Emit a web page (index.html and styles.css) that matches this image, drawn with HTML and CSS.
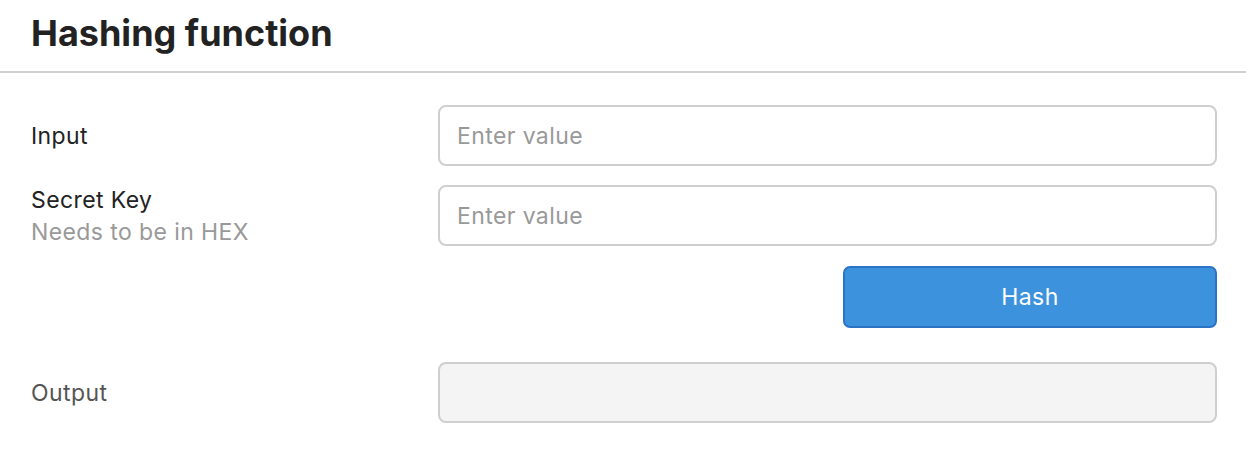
FILE: index.html
```html
<!DOCTYPE html>
<html>
  <head>
    <meta charset="utf-8">
    <meta name="viewport" content="width=device-width">
    <title>Hashing function</title>
    <link rel="stylesheet" href="styles.css">
  </head>
  <body>
    <div class="header">
      <h1>Hashing function</h1>
    </div>
    <div class="form">
      <div class="label">
        <label for="input">Input</label>
      </div>
      <input id="input" class="field" type="text" placeholder="Enter value">

      <div class="label">
        <label for="secret">Secret Key</label>
        <span class="hint">Needs to be in HEX</span>
      </div>
      <input id="secret" class="field" type="text" placeholder="Enter value">

      <div class="actions">
        <button class="hash">Hash</button>
      </div>

      <div class="label output-label">
        <label for="output">Output</label>
      </div>
      <input id="output" class="field output" type="text" readonly>
    </div>
  </body>
</html>
```

FILE: styles.css
```css
body {
  margin: 0;
  font-family: Inter, "Noto Sans", sans-serif;
  color: #222;
  background: #fff;
}
.header {
  padding: 0 31px;
  height: 71px;
  display: flex;
  align-items: center;
  border-bottom: 2px solid #d0d0d0;
}
h1 {
  margin: 0 0 6px;
  font-size: 36px;
  font-weight: 700;
  color: #222;
}
.form {
  display: grid;
  grid-template-columns: 407px 1fr;
  row-gap: 19px;
  padding: 32px 29px 0 31px;
}
.label {
  display: flex;
  flex-direction: column;
  justify-content: center;
  font-size: 23px;
  letter-spacing: 0.4px;
  line-height: 30px;
}
.hint {
  color: #999;
  margin-top: 2px;
}
.output-label {
  color: #555;
  margin-top: 15px;
}
.field {
  box-sizing: border-box;
  height: 61px;
  padding: 0 17px;
  border: 2px solid #cfcfcf;
  border-radius: 8px;
  font-family: inherit;
  font-size: 23px;
  letter-spacing: 0.4px;
  color: #222;
  outline: none;
}
.field::placeholder {
  color: #999;
}
.output {
  background: #f4f4f4;
  margin-top: 15px;
}
.actions {
  grid-column: 2;
  display: flex;
  justify-content: flex-end;
}
.hash {
  width: 374px;
  height: 62px;
  background: #3d92dd;
  border: 2px solid #2d73c4;
  border-radius: 7px;
  color: #fff;
  font-family: inherit;
  font-size: 23px;
  letter-spacing: 0.4px;
}
```
